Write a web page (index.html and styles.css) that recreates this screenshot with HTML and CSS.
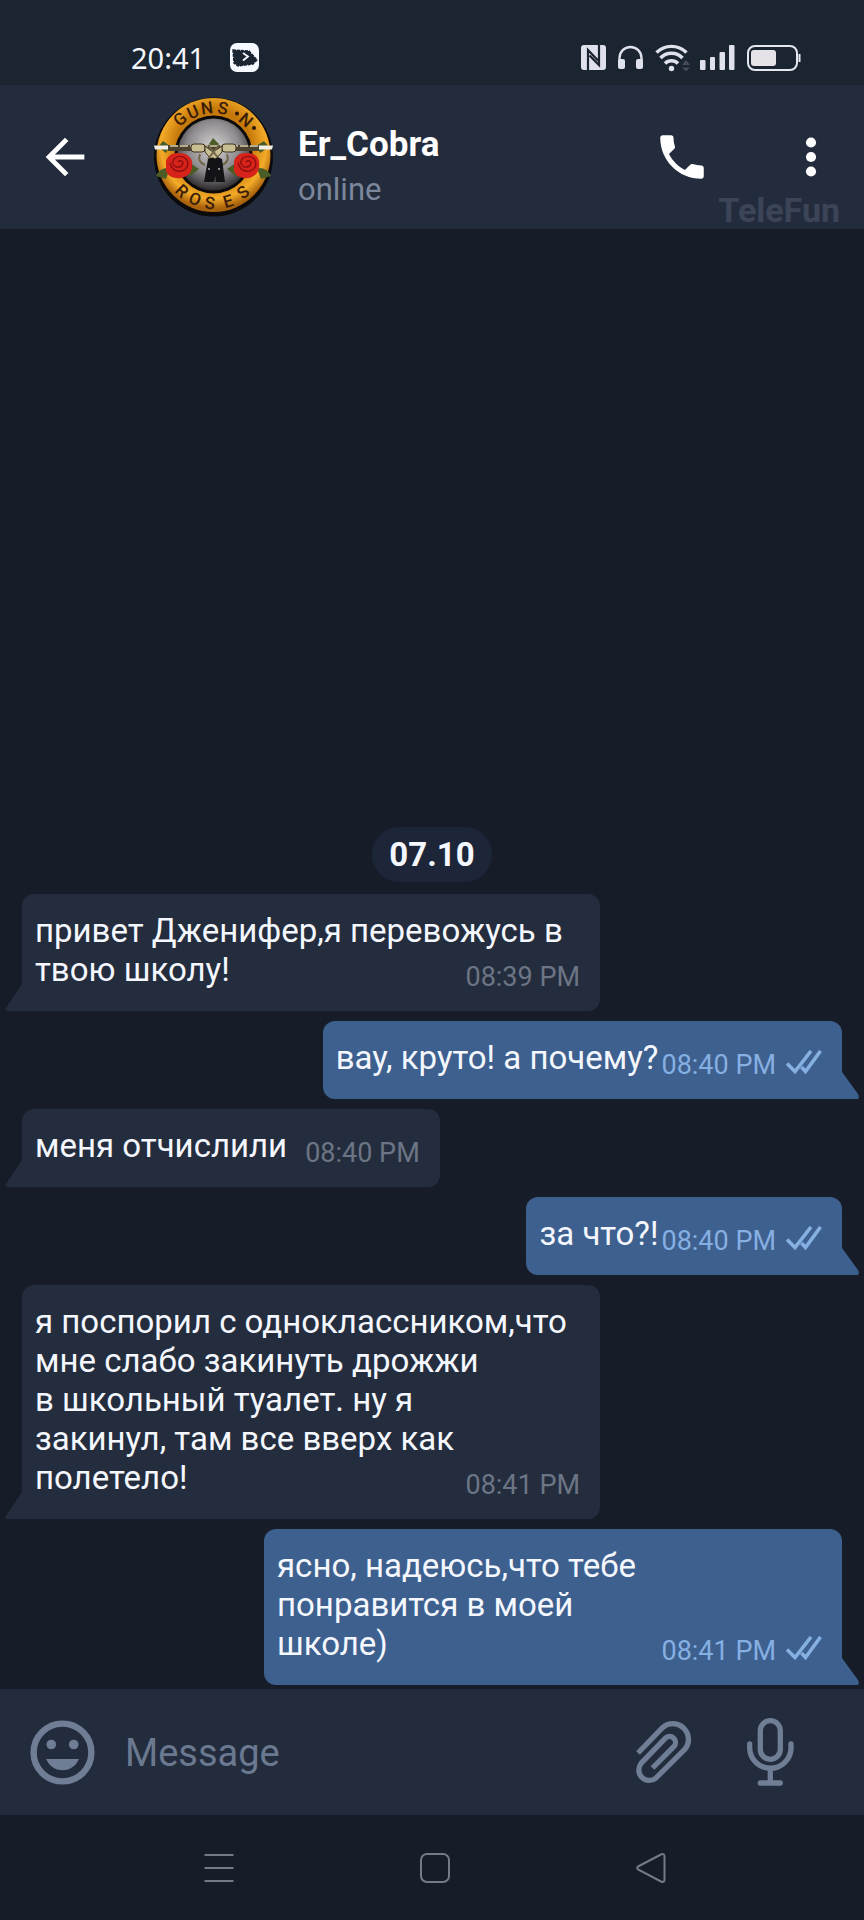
FILE: index.html
```
<!DOCTYPE html>
<html lang="ru">
<head>
  <meta charset="UTF-8">
  <meta name="viewport" content="width=device-width, initial-scale=1.0">
  <title>Er_Cobra</title>
  <link rel="stylesheet" href="styles.css">
</head>
<body>
  <svg class="defs" width="0" height="0" aria-hidden="true">
    <symbol id="checks" viewBox="0 0 36 24">
      <path d="M1 13.500l8 8L25 1M15.500 17l4 4.500L34.500 1" fill="none" stroke="currentColor" stroke-width="3.600"/>
    </symbol>
  </svg>

  <div class="status-bar">
    <span class="clock">20:41</span>
    <svg class="app-icon" width="29" height="29" viewBox="0 0 29 29">
      <rect width="29" height="29" rx="7" fill="#f6f9ff"/>
      <path d="M3 7l16 1 8 9-4 4-15 2-4-3z" fill="#1b2431" stroke="#1b2431" stroke-width="1.500" stroke-dasharray="3 1"/>
      <path d="M13 10l5 3.500-5 4" fill="none" stroke="#f6f9ff" stroke-width="1.800"/>
    </svg>
    <div class="status-icons">
      <svg width="25" height="25" viewBox="0 0 25 25">
        <rect width="25" height="25" rx="3" fill="#dfe2ec"/>
        <path d="M7 25V5l10 10.500M18 0v20L8.500 10.500" fill="none" stroke="#1b2431" stroke-width="2.200"/>
      </svg>
      <svg width="25" height="25" viewBox="0 0 25 25">
        <path d="M1.500 18v-5a11 11 0 0 1 22 0v5" fill="none" stroke="#dfe2ec" stroke-width="2.400"/>
        <rect x="0" y="14" width="7" height="10" rx="2" fill="#dfe2ec"/>
        <rect x="18" y="14" width="7" height="10" rx="2" fill="#dfe2ec"/>
      </svg>
      <svg class="wifi" width="33" height="28" viewBox="0 0 33 28">
        <g fill="none" stroke="#dfe2ec" stroke-width="3.400">
          <path d="M1.500 8.500a21.500 21.500 0 0 1 30 0"/>
          <path d="M5.500 14a15 15 0 0 1 22 0"/>
          <path d="M10 19.500a9 9 0 0 1 13 0"/>
        </g>
        <circle cx="16.500" cy="24.500" r="2.700" fill="#dfe2ec"/>
        <path d="M27 21l4-5 4 5zM27 23.500h8l-4 4z" fill="#454c5a"/>
      </svg>
      <svg width="35" height="25" viewBox="0 0 35 25" fill="#dfe2ec">
        <rect x="0" y="15" width="5.500" height="10" rx="1"/>
        <rect x="10" y="12" width="5" height="13" rx="1"/>
        <rect x="19.500" y="7" width="5.500" height="18" rx="1"/>
        <rect x="29" y="0" width="5.500" height="25" rx="1"/>
      </svg>
      <svg width="54" height="26" viewBox="0 0 54 26">
        <rect x="1" y="1" width="49" height="24" rx="7" fill="none" stroke="#e6e8ef" stroke-width="2"/>
        <rect x="4" y="5" width="25" height="16" rx="3" fill="#e6e3e8"/>
        <path d="M52.500 9v8" stroke="#e6e8ef" stroke-width="2"/>
      </svg>
    </div>
  </div>

  <header class="chat-header">
    <button class="icon-btn" aria-label="Back">
      <svg width="58" height="58" viewBox="0 0 24 24" fill="#fff"><path d="M20 11H7.830l5.590-5.590L12 4l-8 8 8 8 1.410-1.410L7.830 13H20v-2z"/></svg>
    </button>
    <svg class="avatar" width="120" height="120" viewBox="0 0 120 120">
      <defs>
        <radialGradient id="gold" cx="50%" cy="42%" r="55%">
          <stop offset="60%" stop-color="#c77a0c"/>
          <stop offset="84%" stop-color="#f3ab28"/>
          <stop offset="100%" stop-color="#a9620c"/>
        </radialGradient>
        <radialGradient id="steel" cx="50%" cy="40%" r="60%">
          <stop offset="0%" stop-color="#d5d3d4"/>
          <stop offset="60%" stop-color="#8c8a8c"/>
          <stop offset="100%" stop-color="#2c2a2c"/>
        </radialGradient>
      </defs>
      <circle cx="59.500" cy="60" r="59.500" fill="#0c0a0b"/>
      <circle cx="59.500" cy="58" r="57" fill="url(#gold)"/>
      <circle cx="59.500" cy="57.500" r="39" fill="#0c0a0b"/>
      <circle cx="59.500" cy="57.500" r="36" fill="url(#steel)"/>
      <g class="avatar-text">
        <text transform="translate(26 22) rotate(-41)" y="6">G</text>
        <text transform="translate(39 15) rotate(-24)" y="6">U</text>
        <text transform="translate(53 11) rotate(-8)" y="6">N</text>
        <text transform="translate(69 11) rotate(11)" y="6">S</text>
        <text transform="translate(92 23) rotate(41)" y="6">N</text>
        <text transform="translate(28 94) rotate(44)" y="6">R</text>
        <text transform="translate(41 102) rotate(24)" y="6">O</text>
        <text transform="translate(56 106) rotate(5)" y="6">S</text>
        <text transform="translate(74 104) rotate(-17)" y="6">E</text>
        <text transform="translate(89 95) rotate(-39)" y="6">S</text>
      </g>
      <circle cx="83" cy="16.500" r="2" fill="#2a1606"/>
      <circle cx="100" cy="31" r="2" fill="#2a1606"/>
      <!-- leaves -->
      <g fill="#4b5c27">
        <path d="M2 79q4-9 14-8l-4 11zM36 66l9 6-10 8zM117 79q-4-9-14-8l4 11zM82 66l-9 6 10 8zM4 50l5-6 7 5-4 7zM115 50l-5-6-8 5 4 7zM55 47l4-6 6 6-5 4z"/>
      </g>
      <!-- revolvers -->
      <path d="M0 48.500h22v4H1zM119 48.500H97v4h21z" fill="#f3eee6"/>
      <path d="M14 48h91v6H14z" fill="#4b432f"/>
      <path d="M16 49h88" stroke="#d9cfad" stroke-width="1.600" stroke-dasharray="8 2"/>
      <g fill="#c9bd92" stroke="#3a3020" stroke-width="1">
        <rect x="37" y="47" width="14" height="8" rx="3"/>
        <rect x="68" y="47" width="14" height="8" rx="3"/>
        <path d="M51 49l8 6 9-6v6l-6 7h-5l-6-7z"/>
      </g>
      <g fill="none" stroke="#6f6547" stroke-width="2">
        <path d="M46 57q-3 8 5 11M73 57q3 8-5 11M54 48l11 14M65 48L54 62"/>
      </g>
      <path d="M54 62q6-3 7 0 2-3 7 0l3 23H61.500V79L60 85H50z" fill="#131216"/>
      <circle cx="55" cy="72" r="1" fill="#b8b6bc"/>
      <circle cx="65" cy="72" r="1" fill="#b8b6bc"/>
      <!-- roses -->
      <g fill="#d8231b">
        <path d="M12 64q3-9 13-8 10 0 13 8 1 9-3 13-5 5-13 4-8-1-10-7z"/>
        <path d="M80 64q3-9 13-8 10 0 12 8 1 9-3 13-5 5-12 4-8-1-10-7z"/>
      </g>
      <g fill="none" stroke="#8c0f0f" stroke-width="1.400">
        <path d="M16 66q3 10 12 8 8-3 5-11-5-6-12-2-5 5 1 9 6 1 7-4-2-4-5-1"/>
        <path d="M84 66q3 10 12 8 8-3 5-11-5-6-12-2-5 5 1 9 6 1 7-4-2-4-5-1"/>
      </g>
    </svg>
    <div class="contact">
      <div class="name">Er_Cobra</div>
      <div class="presence">online</div>
    </div>
    <button class="icon-btn call" aria-label="Call">
      <svg width="58" height="58" viewBox="0 0 24 24" fill="#fff"><path d="M6.620 10.790c1.440 2.830 3.760 5.140 6.590 6.590l2.200-2.200c.27-.27.67-.36 1.020-.24 1.120.37 2.330.57 3.570.57.55 0 1 .45 1 1V20c0 .55-.45 1-1 1-9.390 0-17-7.610-17-17 0-.55.45-1 1-1h3.500c.55 0 1 .45 1 1 0 1.250.2 2.450.57 3.570.11.35.03.74-.25 1.020l-2.200 2.200z"/></svg>
    </button>
    <button class="icon-btn" aria-label="More">
      <svg width="58" height="58" viewBox="0 0 24 24" fill="#fff"><circle cx="12" cy="6" r="2.100"/><circle cx="12" cy="12" r="2.100"/><circle cx="12" cy="18" r="2.100"/></svg>
    </button>
    <span class="watermark">TeleFun</span>
  </header>

  <main class="messages">
    <div class="date">07.10</div>

    <div class="bubble in wide">
      <p>привет Дженифер,я перевожусь в<br>твою школу!</p>
      <span class="meta">08:39 PM</span>
    </div>
    <div class="bubble out">
      <p>вау, круто! а почему?</p>
      <span class="meta">08:40 PM <svg width="36" height="24"><use href="#checks"/></svg></span>
    </div>
    <div class="bubble in">
      <p>меня отчислили</p>
      <span class="meta">08:40 PM</span>
    </div>
    <div class="bubble out">
      <p>за что?!</p>
      <span class="meta">08:40 PM <svg width="36" height="24"><use href="#checks"/></svg></span>
    </div>
    <div class="bubble in wide">
      <p>я поспорил с одноклассником,что<br>мне слабо закинуть дрожжи<br>в школьный туалет. ну я<br>закинул, там все вверх как<br>полетело!</p>
      <span class="meta">08:41 PM</span>
    </div>
    <div class="bubble out wide">
      <p>ясно, надеюсь,что тебе<br>понравится в моей<br>школе)</p>
      <span class="meta">08:41 PM <svg width="36" height="24"><use href="#checks"/></svg></span>
    </div>
  </main>

  <form class="composer">
    <button type="button" class="icon-btn" aria-label="Emoji">
      <svg width="77" height="77" viewBox="0 0 24 24" fill="currentColor"><circle cx="12" cy="12" r="9" fill="none" stroke="currentColor" stroke-width="2"/><circle cx="8.500" cy="9.500" r="1.500"/><circle cx="15.500" cy="9.500" r="1.500"/><path d="M12 17.500c2.330 0 4.310-1.460 5.110-3.500H6.890c.8 2.040 2.780 3.500 5.110 3.500z"/></svg>
    </button>
    <input type="text" placeholder="Message" aria-label="Message">
    <button type="button" class="icon-btn clip" aria-label="Attach">
      <svg width="56" height="64" viewBox="0 0 56 64" fill="none" stroke="currentColor" stroke-width="5.300"><path d="M2 33L26.700 7.500A15.600 15.600 0 0 1 48.700 29.500L20.100 57.900A10.500 10.500 0 0 1 5.300 43.100L29.200 18.300A6 6 0 0 1 37.800 26.700L16.500 48"/></svg>
    </button>
    <button type="button" class="icon-btn" aria-label="Voice message">
      <svg width="47" height="68" viewBox="0 0 47 68" fill="none" stroke="currentColor" stroke-width="5.300" stroke-linecap="round"><rect x="13.300" y="2.700" width="20" height="38.700" rx="10"/><path d="M2.700 26v5a20.700 20.700 0 0 0 41.300 0v-5M23.300 52v13M13.300 65h20"/></svg>
    </button>
  </form>

  <nav class="nav-bar">
    <button class="icon-btn" aria-label="Recent apps">
      <svg width="30" height="30" viewBox="0 0 30 30"><path d="M.5 2h29M.5 15h29M.5 28h29"/></svg>
    </button>
    <button class="icon-btn" aria-label="Home">
      <svg width="30" height="30" viewBox="0 0 30 30"><rect x="1" y="1" width="28" height="28" rx="6"/></svg>
    </button>
    <button class="icon-btn" aria-label="Back">
      <svg width="30" height="30" viewBox="0 0 30 30"><path d="M2 13.500L25 1.500Q28.500 0 28.500 3.500V26.500Q28.500 30 25 28.500L2 16.500Q.5 15 2 13.500z"/></svg>
    </button>
  </nav>
</body>
</html>
```
FILE: styles.css
```
* {
  box-sizing: border-box;
}
body {
  margin: 0;
  min-height: 100vh;
  display: flex;
  flex-direction: column;
  background-color: #171d28;
  color: #f4f7fd;
  font-family: Roboto, "Noto Sans", sans-serif;
}
svg {
  display: block;
}
.defs {
  position: absolute;
}
.icon-btn {
  padding: 0;
  border: none;
  background: none;
  color: inherit;
  cursor: pointer;
}

/* status bar */
.status-bar {
  display: flex;
  align-items: center;
  height: 85px;
  padding: 30px 63px 0 131px;
  background-color: #1b2431;
}
.clock {
  font-family: "Noto Sans", sans-serif;
  font-size: 29px;
  line-height: 40px;
}
.app-icon {
  margin-left: 25px;
}
.status-icons {
  display: flex;
  align-items: center;
  gap: 12px;
  margin-left: auto;
}
.wifi {
  overflow: visible;
}

/* header */
.chat-header {
  position: relative;
  display: flex;
  align-items: center;
  height: 144px;
  padding: 0 24px 0 36px;
  background-color: #232c3d;
}
.avatar {
  margin-left: 60px;
  overflow: visible;
}
.avatar-text {
  font-family: Roboto, sans-serif;
  font-size: 17px;
  font-weight: 500;
  fill: #3a1d08;
  text-anchor: middle;
}
.contact {
  flex: 1;
  margin-left: 24px;
  padding-top: 18px;
}
.name {
  font-size: 35px;
  font-weight: bold;
  line-height: 44px;
  color: #fff;
}
.presence {
  margin-top: 3px;
  font-size: 31px;
  line-height: 40px;
  color: #7c879b;
}
.call {
  margin-right: 71px;
}
.watermark {
  position: absolute;
  right: 24px;
  bottom: 0;
  font-size: 34px;
  font-weight: bold;
  line-height: 38px;
  color: #3c4557;
}

/* messages */
.messages {
  flex: 1;
  display: flex;
  flex-direction: column;
  justify-content: flex-end;
  align-items: flex-start;
  gap: 10px;
  padding: 0 22px 4px;
}
.date {
  align-self: center;
  margin-bottom: 2px;
  padding: 0 17px;
  border-radius: 28px;
  background-color: #1d2638;
  font-size: 33px;
  font-weight: bold;
  line-height: 55px;
}
.bubble {
  position: relative;
  display: flex;
  align-items: flex-end;
  padding: 17px 20px 18px 13px;
  border-radius: 12px;
  background-color: #242d3d;
}
.bubble p {
  margin: 0 0 4px;
  font-size: 33px;
  line-height: 39px;
}
.meta {
  display: flex;
  align-items: flex-start;
  gap: 10px;
  margin-left: 18px;
  font-size: 27px;
  line-height: 31px;
  color: #6c7585;
}
.bubble::after {
  content: "";
  position: absolute;
  bottom: 0;
  left: -17px;
  width: 34px;
  height: 27px;
  background-color: inherit;
  clip-path: path("M17 0V0L1 24Q-1 27 2 27H34V10z");
}
.out {
  align-self: flex-end;
  background-color: #3d608f;
}
.out .meta {
  margin-left: 3px;
  color: #86afe2;
}
.out::after {
  left: auto;
  right: -17px;
  clip-path: path("M17 0L33 22Q35 27 32 27H0V10z");
}
/* text and time share one cell so long lines run over the time column */
.wide {
  display: grid;
  width: 67%;
  min-width: 578px;
}
.wide p,
.wide .meta {
  grid-area: 1 / 1;
}
.wide .meta {
  align-self: end;
  justify-self: end;
}
.bubble p,
.meta {
  position: relative;
  z-index: 1;
}

/* composer */
.composer {
  display: flex;
  align-items: center;
  height: 126px;
  padding: 0 70px 0 24px;
  background-color: #232c3d;
  color: #6f7d95;
}
.composer input {
  flex: 1;
  min-width: 0;
  margin-left: 24px;
  padding: 2px 0 0;
  border: none;
  outline: none;
  background: none;
  color: #f4f7fd;
  font-family: inherit;
  font-size: 38px;
  line-height: 46px;
}
.composer input::placeholder {
  color: #6b7990;
  opacity: 1;
}
.clip {
  margin-right: 55px;
}

/* system navigation */
.nav-bar {
  display: flex;
  justify-content: space-around;
  align-items: center;
  height: 105px;
  padding: 0 105px 0 111px;
}
.nav-bar svg {
  fill: none;
  stroke: #747a86;
  stroke-width: 2;
}
```
